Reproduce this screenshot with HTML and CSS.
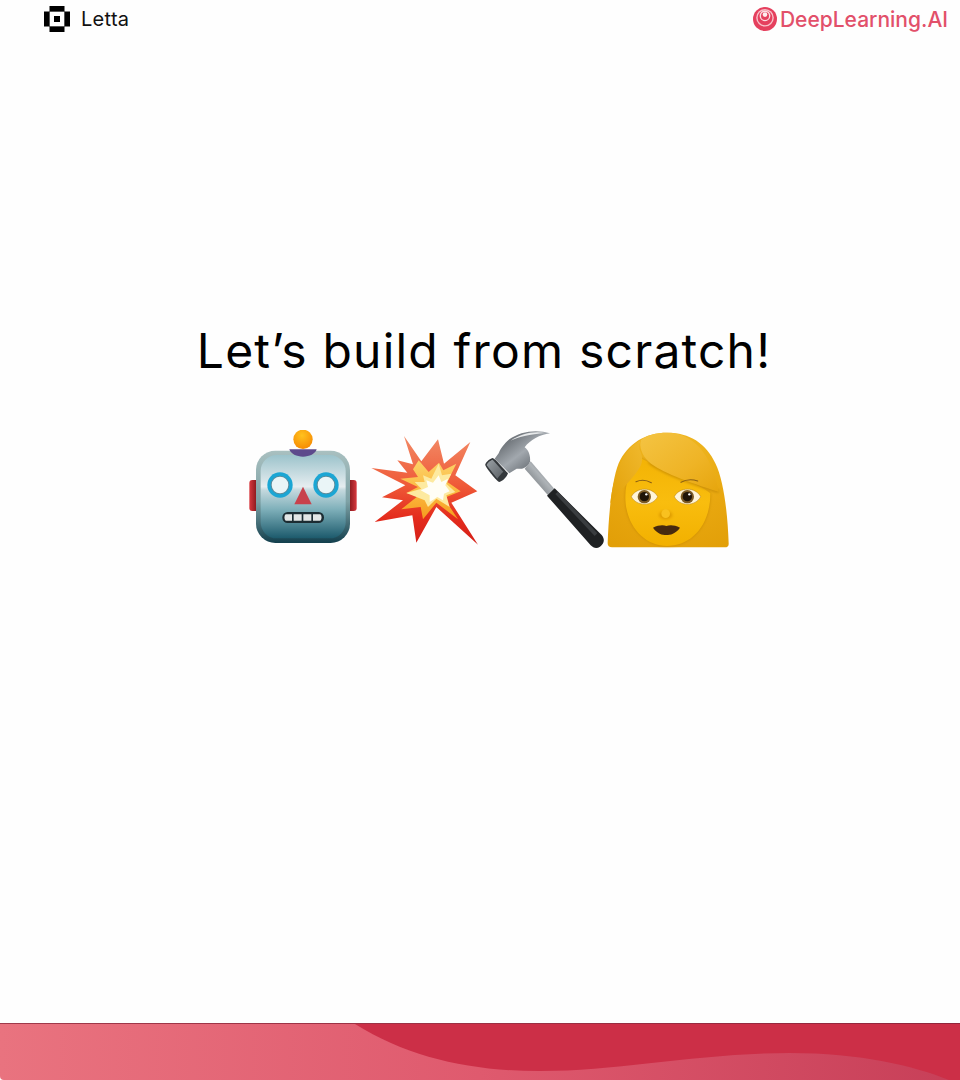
FILE: index.html
```html
<!DOCTYPE html>
<html lang="en">
<head>
<meta charset="utf-8">
<title>Let's build from scratch!</title>
<link rel="stylesheet" href="styles.css">
</head>
<body>
<div class="page">
  <header class="topbar">
    <div class="letta">
      <svg class="letta-mark" viewBox="0 0 26 26" aria-hidden="true">
        <path d="M5.500 0H20.500V5H5.500ZM5.500 21H20.500V26H5.500ZM0 5.500H5V20.500H0ZM21 5.500H26V20.500H21Z"/>
        <path class="letta-ring" d="M5 5H21V21H5ZM6 6V20H20V6Z" fill-rule="evenodd"/>
        <rect x="10" y="10" width="6" height="6"/>
      </svg>
      <span class="letta-name">Letta</span>
    </div>
    <div class="dl">
      <svg class="dl-mark" viewBox="0 0 24 24" aria-hidden="true">
        <circle cx="12" cy="12" r="12" fill="#e5405e"/>
        <circle cx="12" cy="10.800" r="8.800" fill="#f8c2cb"/>
        <circle cx="12" cy="10.800" r="7.400" fill="#e5405e"/>
        <circle cx="12" cy="8.800" r="5.400" fill="#fbdde2"/>
        <circle cx="12" cy="9" r="4" fill="#e5405e"/>
        <circle cx="12" cy="7.600" r="2.300" fill="#fdeef0"/>
      </svg>
      <span class="dl-name">DeepLearning.AI</span>
    </div>
  </header>

  <main class="stage">
    <h1 class="headline">Let’s build from scratch!</h1>
    <div class="emoji-row">
      <svg class="emoji robot" viewBox="27 30 324 360" aria-label="robot">
        <defs>
          <linearGradient id="rim" x1="0" y1="0" x2="0" y2="1">
            <stop offset="0" stop-color="#a9c0c0"/><stop offset=".55" stop-color="#7ea2a6"/><stop offset="1" stop-color="#123f4d"/>
          </linearGradient>
          <linearGradient id="face" x1="0" y1="0" x2="0" y2="1">
            <stop offset="0" stop-color="#9cc3cb"/><stop offset=".38" stop-color="#e6edf0"/><stop offset=".42" stop-color="#c5d9de"/><stop offset=".65" stop-color="#7fb0ba"/><stop offset="1" stop-color="#1c5a6c"/>
          </linearGradient>
          <linearGradient id="ear" x1="0" y1="0" x2="1" y2="0">
            <stop offset="0" stop-color="#d8383e"/><stop offset=".7" stop-color="#8c1a1e"/><stop offset="1" stop-color="#5c0d10"/>
          </linearGradient>
          <linearGradient id="ear-r" x1="1" y1="0" x2="0" y2="0">
            <stop offset="0" stop-color="#d8383e"/><stop offset=".7" stop-color="#8c1a1e"/><stop offset="1" stop-color="#5c0d10"/>
          </linearGradient>
          <radialGradient id="bulb" cx=".45" cy=".3" r=".8">
            <stop offset="0" stop-color="#ffc21e"/><stop offset="1" stop-color="#f58400"/>
          </radialGradient>
        </defs>
        <rect x="28" y="180" width="30" height="93" rx="9" fill="url(#ear)"/>
        <rect x="320" y="180" width="30" height="93" rx="9" fill="url(#ear-r)"/>
        <rect x="48" y="92" width="282" height="277" rx="58" fill="url(#rim)"/>
        <rect x="62" y="105" width="255" height="250" rx="48" fill="url(#face)"/>
        <path d="M148 88H230C226 102 208 110 189 110S152 102 148 88Z" fill="#5d4a8c"/>
        <circle cx="189" cy="58" r="29" fill="url(#bulb)"/>
        <circle cx="120" cy="195" r="38" fill="#1ba6d4"/>
        <circle cx="258" cy="195" r="38" fill="#1ba6d4"/>
        <circle cx="120" cy="195" r="28" fill="#5b8c9c"/>
        <circle cx="258" cy="195" r="28" fill="#5b8c9c"/>
        <circle cx="120" cy="195" r="25" fill="#eaf5f7"/>
        <circle cx="258" cy="195" r="25" fill="#eaf5f7"/>
        <path d="M189 200L215 253H163Z" fill="#c8424c"/>
        <rect x="127" y="276" width="125" height="33" rx="16" fill="#1c2c33"/>
        <path d="M137 283H156V302H137C132 298 132 287 137 283ZM161 283H185V302H161ZM190 283H214V302H190ZM219 283H241C246 287 246 298 241 302H219Z" fill="#e2e6e6"/>
      </svg>

      <svg class="emoji burst" viewBox="9 -6 321 360" aria-label="collision">
        <defs>
          <linearGradient id="burst-out" x1="0" y1="0" x2="0" y2="1">
            <stop offset="0" stop-color="#f28a66"/><stop offset=".45" stop-color="#ef5a38"/><stop offset=".75" stop-color="#e42c1d"/><stop offset="1" stop-color="#d41f17"/>
          </linearGradient>
          <linearGradient id="burst-mid" x1="0" y1="0" x2="0" y2="1">
            <stop offset="0" stop-color="#fcd36a"/><stop offset=".6" stop-color="#fbb53a"/><stop offset="1" stop-color="#f59a1e"/>
          </linearGradient>
        </defs>
        <path d="M108 12L160 88L210 22L228 95L307 30L262 130L328 178L250 212L330 338L205 225L145 332L133 250L20 270L105 205L42 196L112 160L10 108L118 122L88 85L135 97Z" fill="url(#burst-out)"/>
        <path d="M152 85L182 120L213 92L226 115L265 95L238 150L278 178L228 198L270 262L205 212L165 262L158 225L100 232L150 192L115 183L150 165L97 140L150 135L135 112Z" fill="url(#burst-mid)"/>
        <path d="M165 130L190 140L212 95L222 130L250 125L235 155L262 180L235 190L245 225L205 200L180 225L170 205L115 183L160 170L140 150L170 150Z" fill="#fdeaa0"/>
        <path d="M175 145L195 152L212 130L220 150L240 140L232 160L245 178L228 185L225 205L208 195L185 210L185 190L158 175L180 165Z" fill="#fffef6"/>
      </svg>

      <svg class="emoji hammer" viewBox="12 30 363 360" aria-label="hammer">
        <defs>
          <linearGradient id="steel" x1="0" y1="0" x2="1" y2="1">
            <stop offset="0" stop-color="#44494e"/><stop offset=".5" stop-color="#a2a8ae"/><stop offset=".78" stop-color="#6a7076"/><stop offset="1" stop-color="#33373b"/>
          </linearGradient>
          <linearGradient id="neck" x1="0" y1="1" x2="1" y2="0">
            <stop offset="0" stop-color="#4c5156"/><stop offset=".55" stop-color="#aeb3b7"/><stop offset="1" stop-color="#4f5459"/>
          </linearGradient>
          <linearGradient id="face-block" x1="0" y1="0" x2="1" y2="1">
            <stop offset="0" stop-color="#9aa0a5"/><stop offset="1" stop-color="#5a5f64"/>
          </linearGradient>
        </defs>
        <path d="M134 146L206 228L224 208L152 124Z" fill="url(#neck)"/>
        <path d="M201 227L224 205L365 345C376 358 372 372 360 380C350 387 340 384 332 376Z" fill="#1f2123"/>
        <path d="M226 222L234 215L352 340L344 348Z" fill="#3a3d40"/>
        <path d="M210 40C170 27 120 34 88 58C72 72 60 88 56 100L44 116L88 160L110 146C122 148 140 146 150 125C152 108 146 90 134 82C150 60 180 44 210 40Z" fill="url(#steel)"/>
        <path d="M196 39C160 32 120 42 92 62C112 52 150 42 196 39Z" fill="#e7e9ea"/>
        <path d="M16 136C14 130 28 116 38 114C46 116 72 148 84 160C80 172 68 184 58 186C50 184 20 146 16 136Z" fill="#34383c"/>
        <path d="M20 136C20 130 31 121 38 119L70 155C64 160 56 170 52 176Z" fill="url(#face-block)"/>
      </svg>

      <svg class="emoji woman" viewBox="10 0 366 360" aria-label="woman">
        <defs>
          <radialGradient id="hair" cx=".55" cy=".15" r=".95">
            <stop offset="0" stop-color="#f0b924"/><stop offset=".6" stop-color="#e8a70f"/><stop offset="1" stop-color="#e29f08"/>
          </radialGradient>
          <linearGradient id="skin" x1="0" y1="0" x2="0" y2="1">
            <stop offset="0" stop-color="#f3b305"/><stop offset=".5" stop-color="#f9bd0e"/><stop offset="1" stop-color="#f2b000"/>
          </linearGradient>
          <linearGradient id="fringe" x1="0" y1="0" x2="1" y2="1">
            <stop offset="0" stop-color="#f4c443"/><stop offset=".6" stop-color="#efb426"/><stop offset="1" stop-color="#e6a50d"/>
          </linearGradient>
          <linearGradient id="lock" x1="1" y1="0" x2="0" y2="1">
            <stop offset="0" stop-color="#f0b92e"/><stop offset="1" stop-color="#e3a108"/>
          </linearGradient>
          <filter id="soft" x="-20%" y="-20%" width="140%" height="140%">
            <feGaussianBlur stdDeviation="5"/>
          </filter>
        </defs>
        <path d="M190 8C125 8 72 40 45 100C25 150 15 250 12 340Q12 352 25 352H363Q376 352 375 340C372 250 360 150 335 100C308 40 258 8 190 8Z" fill="url(#hair)"/>
        <path d="M112 85C85 115 65 150 65 200C65 290 125 348 190 348C260 348 320 290 320 190Z" fill="#c98a02" filter="url(#soft)"/>
        <path d="M112 85C85 115 65 150 65 200C65 290 125 348 190 348C260 348 320 290 320 190C300 170 200 130 112 85Z" fill="url(#skin)"/>
        <path d="M135 95C170 125 250 155 345 185" fill="none" stroke="#b97f06" stroke-width="6" filter="url(#soft)"/>
        <path d="M112 30C105 50 115 75 135 95C170 125 250 155 345 185C330 100 285 8 190 8C160 8 130 15 112 30Z" fill="url(#fringe)"/>
        <path d="M112 30C60 55 30 130 20 220C40 190 75 160 100 125C120 100 118 80 108 60C106 48 108 38 112 30Z" fill="url(#lock)"/>
        <path d="M97 155Q120 145 143 158" fill="none" stroke="#8a5f14" stroke-width="3.500" stroke-linecap="round"/>
        <path d="M232 157Q255 144 282 153" fill="none" stroke="#8a5f14" stroke-width="3.500" stroke-linecap="round"/>
        <path d="M83 200C98 170 147 170 162 200C147 230 98 230 83 200Z" fill="#fff5d8" stroke="#b07c12" stroke-width="1.500"/>
        <path d="M212 200C227 170 276 170 291 200C276 230 227 230 212 200Z" fill="#fff5d8" stroke="#b07c12" stroke-width="1.500"/>
        <circle cx="122" cy="200" r="20" fill="#7c5b26"/>
        <circle cx="251" cy="200" r="20" fill="#7c5b26"/>
        <circle cx="122" cy="200" r="14" fill="#1f1408"/>
        <circle cx="251" cy="200" r="14" fill="#1f1408"/>
        <circle cx="128" cy="193" r="3.500" fill="#fff"/>
        <circle cx="257" cy="193" r="3.500" fill="#fff"/>
        <path d="M166 256C170 238 202 238 206 256C202 272 170 272 166 256Z" fill="#dd9a02" filter="url(#soft)"/>
        <circle cx="186" cy="251" r="13" fill="#f9c11f"/>
        <path d="M148 293C165 284 180 284 188 288C198 284 212 284 229 293C215 312 200 315 188 315C175 315 162 312 148 293Z" fill="#47290f"/>
      </svg>
    </div>
  </main>

  <footer class="band">
    <svg class="band-wave" viewBox="0 0 960 56" preserveAspectRatio="none" aria-hidden="true">
      <path d="M355 0C410 34 470 47 540 47C620 47 700 29 790 29C860 29 915 42 949 56H960V0Z" fill="#cc2f47"/>
    </svg>
  </footer>
</div>
</body>
</html>
```

FILE: styles.css
```css
* { box-sizing: border-box; }
html, body { margin: 0; padding: 0; background: #fefefe; }
.page {
  width: 960px;
  height: 1080px;
  display: flex;
  flex-direction: column;
  overflow: hidden;
}
.topbar {
  height: 38px;
  padding: 0 12px 0 44px;
  display: flex;
  justify-content: space-between;
  align-items: center;
}
.letta { display: flex; align-items: center; gap: 11px; }
.letta-mark { width: 26px; height: 26px; display: block; fill: #000; }
.letta-ring { fill: #555; }
.letta-name {
  font: 400 20px/1 Inter, "Liberation Sans", sans-serif;
  letter-spacing: .3px;
  color: #111;
}
.dl { display: flex; align-items: center; gap: 3px; }
.dl-mark { width: 24px; height: 24px; display: block; }
.dl-name {
  font: 500 21px/1 Inter, "Liberation Sans", sans-serif;
  color: #e2506a;
}
.stage {
  flex: 1;
  display: flex;
  flex-direction: column;
  align-items: center;
  padding-top: 286px;
}
.headline {
  margin: 0;
  padding-left: 8px;
  font: 400 48px/54px Inter, "Liberation Sans", sans-serif;
  letter-spacing: 1.200px;
  color: #000;
  white-space: nowrap;
}
.emoji-row {
  margin-top: 52px;
  padding-left: 18px;
  display: flex;
}
.emoji { height: 120px; display: block; flex: none; }
.robot { width: 108px; }
.burst { width: 107px; margin-left: 14px; }
.hammer { width: 121px; margin-left: 6px; }
.woman { width: 122px; margin-left: 2px; }
.band {
  height: 57px;
  background: linear-gradient(90deg, #e9737f 0%, #df5a6e 50%, #c73f58 100%);
  border-top: 1px solid rgba(110, 20, 40, .6);
  border-bottom-left-radius: 4px;
}
.band-wave { width: 100%; height: 100%; display: block; }
```
